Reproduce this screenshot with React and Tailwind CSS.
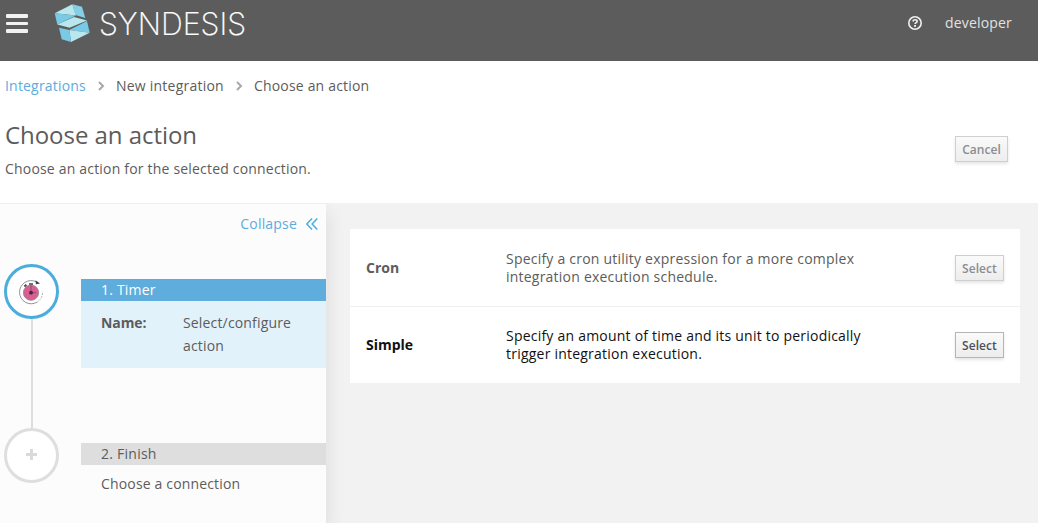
import React from "react";

function Logo() {
  return (
    <svg className="ml-[26px] h-[38px] w-[36px] shrink-0" viewBox="0 0 36 38" aria-hidden="true">
      <polygon points="0.7,9.3 18.3,0.3 22,11.5" fill="#b9e7ee" />
      <polygon points="18.3,0.3 28,2.7 31.3,14 21.5,11" fill="#84cfe6" />
      <polygon points="0.7,9.3 22,11.5 3.3,20.5" fill="#79cae4" />
      <polygon points="3.3,20.5 20,13 33,16.5 15.5,23.7" fill="#b9e7ee" />
      <polygon points="33,17 15.3,26 35.7,28.7" fill="#79cae4" />
      <polygon points="15.3,26 35.7,28.7 17,38" fill="#b9e7ee" />
      <polygon points="5,23.7 15.3,26 17,38 7.7,35.3" fill="#79cae4" />
    </svg>
  );
}

function TimerIcon() {
  return (
    <svg className="mr-px h-[26px] w-[26px]" viewBox="0 0 26 26" fill="none" aria-hidden="true">
      <path d="M18.5 2.9A11.6 11.6 0 1 0 19 23.2" stroke="#777" strokeWidth=".8" />
      <path d="M19 23.2A11.6 11.6 0 0 0 24.6 12.5" stroke="#999" strokeWidth=".7" strokeDasharray="2 1" />
      <path d="m17.5 1.2 4.6 3.4-4.2 .6z" fill="#444" />
      <circle cx="13" cy="13.7" r="7.6" fill="#db5d93" stroke="#888" strokeWidth=".8" />
      <path d="M11 4.2h4v1.6h-4zM5.8 6.8l2-1.8 1.2 1.4-2 1.8z" fill="#444" />
      <path d="M13 6v7.7h5" stroke="#84506a" strokeWidth=".9" />
      <circle cx="13" cy="13.7" r="1.9" fill="#333" />
    </svg>
  );
}

function Chevron() {
  return (
    <svg className="mx-[11px] mt-px h-[10px] w-2" viewBox="0 0 8 10" fill="none" aria-hidden="true">
      <path d="m2 1 4 4-4 4" stroke="#a8a8a8" strokeWidth="2" />
    </svg>
  );
}

function Button({ children, disabled, className }) {
  return (
    <button
      className={
        "h-[26px] shrink-0 border bg-linear-to-b from-[#fafafa] to-[#ededed] pt-px text-center text-[12px] leading-[24px] font-semibold tracking-[0.05px] shadow-[0_2px_3px_rgba(3,3,3,0.1)] " +
        (disabled ? "border-[#cfcfcf] text-[#8b8d8f] " : "border-[#b5b5b5] text-[#4d5258] ") +
        className
      }
    >
      {children}
    </button>
  );
}

function ActionRow({ name, description, disabled, className, nameClassName }) {
  return (
    <div className={"flex items-center pr-4 pl-4 " + className}>
      <div className={"w-[140px] shrink-0 font-bold tracking-normal " + nameClassName}>{name}</div>
      <div className="w-[380px] leading-[18px] tracking-[0.22px]">{description}</div>
      <Button disabled={disabled} className="ml-auto w-[49px]">Select</Button>
    </div>
  );
}

export default function App() {
  return (
    <div className="flex h-[523px] w-[1038px] flex-col overflow-hidden bg-white font-['Open_Sans',sans-serif] text-[14px] tracking-[0.19px] text-[#5c5c5c]">
      <header className="flex h-[61px] shrink-0 items-start bg-[#5c5c5c] pl-[6px]">
        <div className="mt-[14px] flex w-[22px] flex-col gap-1">
          <span className="h-[3.5px] rounded-[1px] bg-[#f1f1f1]" />
          <span className="h-[3.5px] rounded-[1px] bg-[#f1f1f1]" />
          <span className="h-[3.5px] rounded-[1px] bg-[#f1f1f1]" />
        </div>
        <div className="mt-1">
          <Logo />
        </div>
        <svg className="ml-[9px] h-[46px] w-[156px] overflow-visible" viewBox="0 0 156 46" role="img">
          <text x="0" y="34.5" textLength="147" lengthAdjust="spacingAndGlyphs" fill="#fff" stroke="#fff" strokeWidth=".2" className="font-['Inter',sans-serif] text-[31px] font-extralight tracking-normal">
            SYNDESIS
          </text>
        </svg>
        <div className="mt-1 mr-[26px] ml-auto flex h-[38px] items-center text-[#e2e2e2]">
          <svg className="mr-[23px] h-[14px] w-[14px]" viewBox="0 0 14 14" fill="none" aria-hidden="true">
            <circle cx="7" cy="7" r="6.2" stroke="#f1f1f1" strokeWidth="1.6" />
            <path d="M4.9 5.5c.2-1.1 1-1.7 2.1-1.7s2.1.6 2.1 1.6C9.1 6.6 7.1 6.6 7.1 8.1" stroke="#f1f1f1" strokeWidth="1.6" />
            <rect x="6.1" y="9" width="1.9" height="1.8" fill="#f1f1f1" />
          </svg>
          <span className="-mt-0.5">developer</span>
        </div>
      </header>

      <section className="flex h-[142px] shrink-0 flex-col pl-[5px]">
        <nav className="mt-[14px] mb-px flex h-5 items-center">
          <a className="text-[#5bacde]">Integrations</a>
          <Chevron />
          <span className="tracking-[0.23px]">New integration</span>
          <Chevron />
          <span>Choose an action</span>
        </nav>
        <div className="flex">
          <div>
            <h1 className="mt-[24px] text-[24px] leading-[30px] tracking-[-0.05px]">Choose an action</h1>
            <p className="mt-[9px] leading-5">Choose an action for the selected connection.</p>
          </div>
          <Button disabled className="mt-[40px] mr-[30px] ml-auto w-[53px]">Cancel</Button>
        </div>
      </section>

      <main className="flex min-h-0 flex-1 bg-[#f2f2f2]">
        <aside className="w-[326px] shrink-0 border-t border-[#f0f0f0] bg-[#fcfcfc] shadow-[4px_8px_16px_rgba(0,0,0,0.07)] [clip-path:inset(0_-30px_0_0)]">
          <div className="mt-[9px] flex h-5 items-center justify-end pr-[8px] text-[#5bacde]">
            Collapse
            <svg className="mt-px ml-[9px] h-3 w-3" viewBox="0 0 12 12" fill="none" aria-hidden="true">
              <path d="M6 .5.8 6 6 11.5M11.3.5 6.1 6l5.2 5.5" stroke="#4badde" strokeWidth="1.5" />
            </svg>
          </div>

          <div className="mt-[31px] flex h-[164px] pl-1">
            <div className="flex w-[55px] flex-col items-center">
              <div className="flex h-[55px] w-[55px] shrink-0 items-center justify-center rounded-full border-3 border-[#4badde] bg-white">
                <TimerIcon />
              </div>
              <div className="w-[2px] flex-1 bg-[#dedede]" />
            </div>
            <div className="mt-[15px] ml-[22px] h-[89px] flex-1 bg-[#e2f2fb]">
              <div className="h-[22px] bg-[#5eaddd] pl-5 leading-[22px] text-white">1. Timer</div>
              <div className="mt-[10px] flex pl-5 leading-[23px]">
                <div className="w-[82px] font-bold tracking-[-0.1px]">Name:</div>
                <div className="w-[130px] tracking-[0.16px]">Select/configure action</div>
              </div>
            </div>
          </div>

          <div className="flex pl-1">
            <div className="flex h-[55px] w-[55px] shrink-0 items-center justify-center rounded-full border-3 border-[#dedede] bg-white">
              <svg className="-mt-[2px] h-[11px] w-[11px]" viewBox="0 0 11 11" aria-hidden="true">
                <path d="M4 0h3v4h4v3H7v4H4V7H0V4h4z" fill="#dadada" />
              </svg>
            </div>
            <div className="mt-[15px] ml-[22px] flex-1">
              <div className="h-[22px] bg-[#dedede] pl-5 leading-[22px] tracking-[0.25px]">2. Finish</div>
              <div className="mt-[8px] pl-5 leading-[22px] tracking-[0.16px]">Choose a connection</div>
            </div>
          </div>
        </aside>

        <div className="mt-[26px] ml-6 h-[154px] w-[670px] bg-white">
          <ActionRow
            name="Cron"
            description="Specify a cron utility expression for a more complex integration execution schedule."
            disabled
            className="h-[78px] border-b border-[#f0f0f0]"
            nameClassName=""
          />
          <ActionRow
            name="Simple"
            description="Specify an amount of time and its unit to periodically trigger integration execution."
            className="h-[76px] text-[#111]"
            nameClassName="-mt-px"
          />
        </div>
      </main>
    </div>
  );
}
